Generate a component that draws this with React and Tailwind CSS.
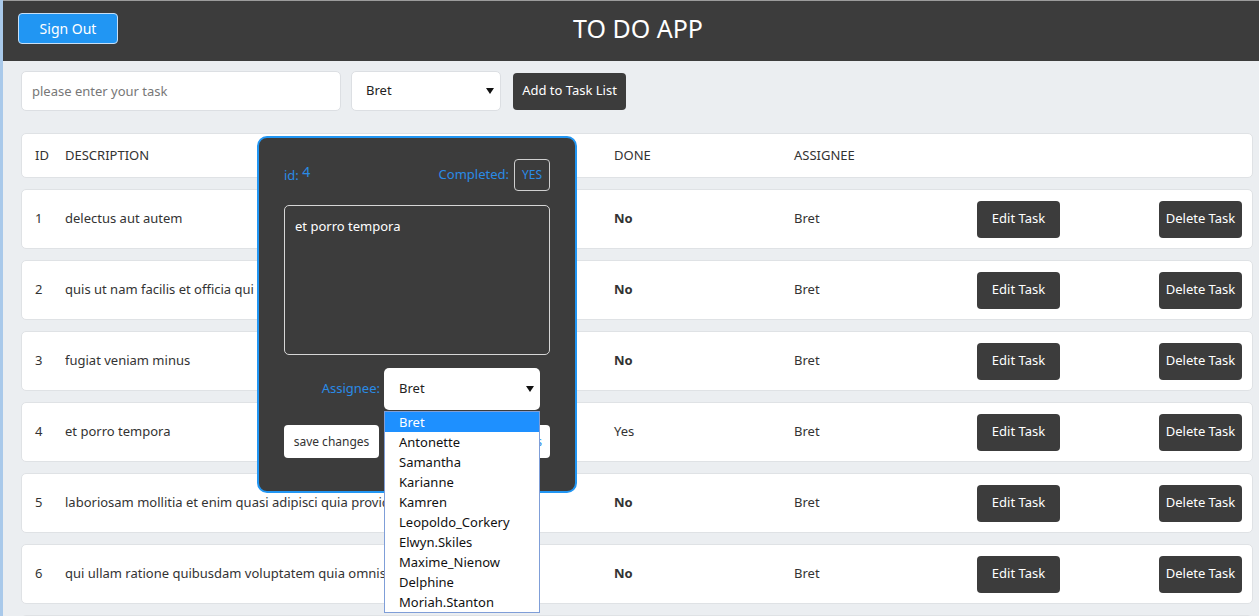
import React from 'react';

const tasks = [
  { id: 1, description: 'delectus aut autem', done: false, assignee: 'Bret' },
  { id: 2, description: 'quis ut nam facilis et officia qui', done: false, assignee: 'Bret' },
  { id: 3, description: 'fugiat veniam minus', done: false, assignee: 'Bret' },
  { id: 4, description: 'et porro tempora', done: true, assignee: 'Bret' },
  { id: 5, description: 'laboriosam mollitia et enim quasi adipisci quia provident illum', done: false, assignee: 'Bret' },
  { id: 6, description: 'qui ullam ratione quibusdam voluptatem quia omnis', done: false, assignee: 'Bret' },
  { id: 7, description: 'illo expedita consequatur quia in', done: false, assignee: 'Bret' },
];

const users = [
  'Bret',
  'Antonette',
  'Samantha',
  'Karianne',
  'Kamren',
  'Leopoldo_Corkery',
  'Elwyn.Skiles',
  'Maxime_Nienow',
  'Delphine',
  'Moriah.Stanton',
];

const Arrow = () => (
  <svg width="8" height="6" viewBox="0 0 8 6" className="shrink-0">
    <polygon points="0,0 8,0 4,6" fill="#111" />
  </svg>
);

const TaskRow = ({ task }) => (
  <div className="shrink-0 grid grid-cols-[30px_549px_180px_183px_1fr_83px] items-center h-[60px] pl-[13px] pr-[10px] bg-white rounded-[5px] border border-[#dfe2e5] overflow-hidden whitespace-nowrap">
    <span>{task.id}</span>
    <span className="overflow-hidden">{task.description}</span>
    <span className={task.done ? '' : 'font-bold'}>{task.done ? 'Yes' : 'No'}</span>
    <span>{task.assignee}</span>
    <div>
      <button className="w-[83px] h-[37px] bg-[#3c3c3c] text-white rounded-[4px]">Edit Task</button>
    </div>
    <button className="w-[83px] h-[37px] bg-[#3c3c3c] text-white rounded-[4px]">Delete Task</button>
  </div>
);

const EditModal = () => (
  <div className="absolute left-[254px] top-[135px] w-[320px] h-[357px] bg-[#3c3c3c] border-2 border-[#2196f3] rounded-[10px] px-[25px] pt-[20px] text-[13px]">
    <div className="flex items-center justify-between h-[33px]">
      <span className="text-[#2a8be6]">
        id: <span className="relative -top-[3px] text-[14px]">4</span>
      </span>
      <div className="flex items-center gap-[5px]">
        <span className="text-[#2a8be6]">Completed:</span>
        <button className="w-[36px] h-[32px] border border-[#cfcfcf] rounded-[4px] text-[#2a8be6] text-[12px]">YES</button>
      </div>
    </div>
    <div className="mt-[14px] h-[150px] border border-[#d6d6d6] rounded-[5px] px-[10px] pt-[11px] text-white">
      et porro tempora
    </div>
    <div className="flex items-center mt-[13px] h-[42px]">
      <span className="w-[100px] text-right pr-[4px] text-[#2a8be6]">Assignee:</span>
      <div className="w-[156px] h-[42px] bg-white rounded-[5px] flex items-center justify-between pl-[15px] pr-[6px] text-[#222]">
        <span>Bret</span>
        <Arrow />
      </div>
    </div>
    <div className="flex items-center justify-between mt-[15px]">
      <button className="w-[95px] h-[33px] bg-white rounded-[4px] text-[#333] text-[12px]">save changes</button>
      <button className="w-[100px] h-[33px] bg-white rounded-[4px] text-[#2a8be6] text-[12px] text-right pr-[8px]">cancel edits</button>
    </div>
  </div>
);

const Dropdown = () => (
  <div className="absolute left-[381px] top-[410px] w-[156px] border border-[#7f9ed8] bg-white text-[13px] text-[#111]">
    {users.map((u, i) => (
      <div
        key={u}
        className={`h-[20px] leading-[20px] pl-[14px] ${i === 0 ? 'bg-[#1e90ff] text-white' : ''}`}
      >
        {u}
      </div>
    ))}
  </div>
);

export default function App() {
  return (
    <div className="flex w-[1259px] h-[616px] overflow-hidden bg-[#a9c9ea] text-[13px] text-[#333]" style={{ fontFamily: '"Noto Sans", "Open Sans", sans-serif' }}>
      <div className="w-[3px] shrink-0" />
      <div className="relative flex-1 flex flex-col bg-[#ebeef1] border-t border-[#9c9c9c]">
        <header className="shrink-0 flex items-start h-[60px] bg-[#3c3c3c] pl-[15px] pt-[12px]">
          <button className="w-[100px] h-[31px] bg-[#2196f3] text-white text-[14px] rounded-[4px] border border-[#c8dff5]">Sign Out</button>
          <h1 className="flex-1 text-center text-white text-[25px] leading-[31px] pr-[101px]">TO DO APP</h1>
        </header>

        <div className="flex flex-col pl-[18px] pr-[6px]">
          <div className="shrink-0 flex items-center gap-[10px] mt-[10px] h-[40px]">
            <input
              className="w-[320px] h-[40px] bg-white rounded-[5px] border border-[#dcdfe3] px-[10px] placeholder-[#777] outline-none"
              placeholder="please enter your task"
            />
            <div className="w-[150px] h-[40px] bg-white rounded-[5px] border border-[#dcdfe3] flex items-center justify-between pl-[14px] pr-[6px] text-[#222]">
              <span>Bret</span>
              <Arrow />
            </div>
            <button className="ml-[2px] w-[113px] h-[37px] bg-[#3c3c3c] text-white rounded-[4px]">Add to Task List</button>
          </div>

          <div className="shrink-0 grid grid-cols-[30px_549px_180px_1fr] items-center mt-[22px] h-[45px] pl-[13px] bg-white rounded-[5px] border border-[#dfe2e5]">
            <span>ID</span>
            <span>DESCRIPTION</span>
            <span>DONE</span>
            <span>ASSIGNEE</span>
          </div>

          <div className="flex flex-col gap-[11px] mt-[11px]">
            {tasks.map((t) => (
              <TaskRow key={t.id} task={t} />
            ))}
          </div>
        </div>

        <EditModal />
        <Dropdown />
      </div>
    </div>
  );
}
